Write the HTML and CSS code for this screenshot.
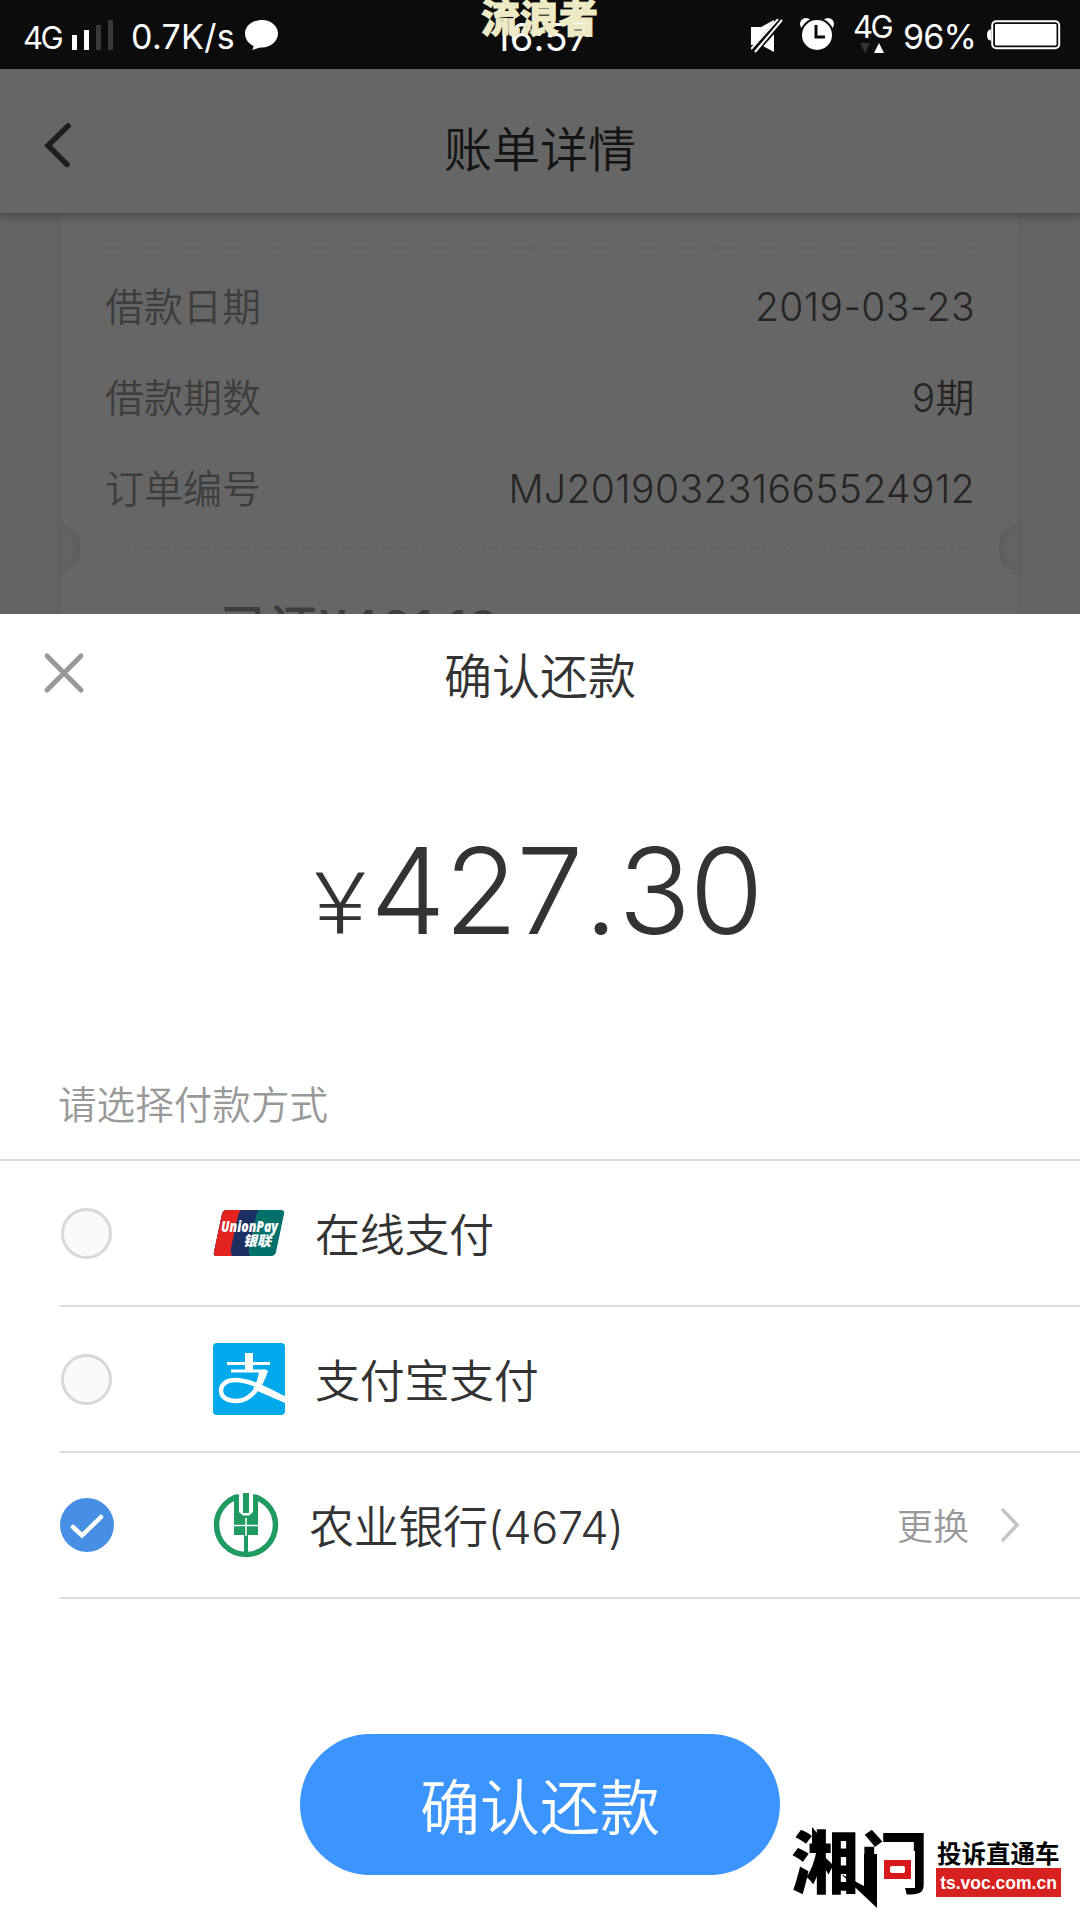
FILE: index.html
```html
<!DOCTYPE html>
<html lang="zh-CN">
<head>
    <meta charset="UTF-8">
    <meta name="viewport" content="width=device-width, initial-scale=1.0">
    <title>确认还款</title>
    <link rel="stylesheet" href="styles.css">
</head>
<body>

    <div class="status-bar">
        <span class="net">4G</span>
        <svg class="signal" width="42" height="30" viewBox="0 0 42 30">
            <path d="M0 15h5v15h-5zM12 10h5v20h-5z" fill="#fff"/>
            <path d="M24 5h5v25h-5zM36 0h5v30h-5z" fill="#383838"/>
        </svg>
        <span class="speed">0.7K/s</span>
        <svg class="bubble" width="34" height="31" viewBox="0 0 34 31">
            <path d="M17 0C26 0 33 6 33 13.500S26 27.500 17 27.500c-2 0-3 0-5 1l-5 1.500c1-1.500 1.500-2.500 1.500-4C3.500 23.500 0 19 0 13.500 0 6 7.500 0 17 0z" fill="#fff"/>
        </svg>
        <span class="time">16:57</span>
        <span class="nickname">流浪者</span>

        <div class="status-right">
            <svg class="mute" width="32" height="34" viewBox="0 0 32 34">
                <path d="M0 8h10L23 1v32L10 26H0z" fill="#fff"/>
                <path d="M1 34L31 0" stroke="#0c0c0c" stroke-width="8"/>
                <path d="M0 30L27 0M4 33L31 1" stroke="#fff" stroke-width="2"/>
            </svg>
            <svg class="alarm" width="34" height="33" viewBox="0 0 34 33">
                <circle cx="6" cy="6" r="6" fill="#fff"/>
                <circle cx="28" cy="6" r="6" fill="#fff"/>
                <circle cx="17" cy="17" r="17" fill="#0c0c0c"/>
                <circle cx="17" cy="17" r="15" fill="#fff"/>
                <path d="M16 7v12h9" fill="none" stroke="#0c0c0c" stroke-width="3"/>
            </svg>
            <div class="net-right">
                <span>4G</span>
                <svg width="26" height="10" viewBox="0 0 26 10">
                    <path d="M0 0h10L5 10z" fill="#333"/>
                    <path d="M14 10h10L19 0z" fill="#fff"/>
                </svg>
            </div>
            <span class="percent">96%</span>
            <svg class="battery" width="74" height="30" viewBox="0 0 74 30">
                <path d="M4 9.500q-4 0-4 5.500t4 5.500z" fill="#fff"/>
                <rect x="5.200" y="1.200" width="67" height="27" rx="4" fill="none" stroke="#fff" stroke-width="2"/>
                <rect x="8" y="4" width="61.500" height="21.500" rx="1" fill="#fff"/>
            </svg>
        </div>
    </div>

    <div class="page">
        <div class="nav">
            <svg class="back" width="30" height="48" viewBox="0 0 30 48">
                <path d="M26 5L6 24.500l19 19" fill="none" stroke="#4d4d4d" stroke-width="5.500" stroke-linecap="round"/>
            </svg>
            <h1>账单详情</h1>
        </div>
        <div class="bill">
            <div class="detail">
                <div class="detail-row"><span class="label">借款日期</span><span>2019-03-23</span></div>
                <div class="detail-row"><span class="label">借款期数</span><span>9期</span></div>
                <div class="detail-row"><span class="label">订单编号</span><span class="order-no">MJ201903231665524912</span></div>
            </div>
            <i class="notch notch-left"></i>
            <i class="notch notch-right"></i>
            <div class="repaid">已还¥421.12</div>
        </div>
        <div class="mask"></div>
    </div>

    <div class="sheet">
        <div class="sheet-head">
            <svg class="close" width="42" height="42" viewBox="0 0 42 42">
                <path d="M4 4l34 34M38 4L4 38" stroke="#999" stroke-width="5" stroke-linecap="round"/>
            </svg>
            <h2>确认还款</h2>
        </div>

        <div class="amount"><span class="yen">¥</span><span class="num">427<span class="dot">.</span>30</span></div>

        <div class="tip">请选择付款方式</div>

        <div class="option">
            <i class="radio"></i>
            <svg class="logo" width="72" height="46" viewBox="0 0 72 46">
                <path d="M14 0H68q4 0 3 4L63 42q-1 4-5 4H4q-4 0-3-4L9 4q1-4 5-4z" fill="#00706b"/>
                <path d="M14 0H46q-2 2-3 6L36 38q-1 4 1 8H4q-4 0-3-4L9 4q1-4 5-4z" fill="#1b2f63"/>
                <path d="M14 0H28q-2 2-3 6L18 38q-1 4 1 8H4q-4 0-3-4L9 4q1-4 5-4z" fill="#e2231f"/>
                <text x="8" y="22" class="union-en" textLength="57" lengthAdjust="spacingAndGlyphs">UnionPay</text>
                <text x="30" y="36" class="union-cn">银联</text>
            </svg>
            <span class="name">在线支付</span>
        </div>

        <div class="option">
            <i class="radio"></i>
            <svg class="logo" width="72" height="72" viewBox="0 0 72 72">
                <rect width="72" height="72" rx="4" fill="#00a8ec"/>
                <path d="M32 10h8v9h-8zM14 19h43v3H14zM32 22h8v6h-8z" fill="#fff"/>
                <path d="M18 28h35" stroke="#fff" stroke-width="3"/>
                <path d="M53 27C48 43 38 58 23 58c-9 0-15-4-15-10.500C8 41 14 37 22 37c14 0 29 8 50 19" fill="none" stroke="#fff" stroke-width="4.500"/>
                <path d="M46 28h8.500c-2 6-4 10-7 15l-5-2c2-4 3-8 3.500-13z" fill="#fff"/>
                <path d="M42 42l30 11v7L40 46z" fill="#fff"/>
            </svg>
            <span class="name">支付宝支付</span>
        </div>

        <div class="option">
            <i class="radio checked">
                <svg width="54" height="54" viewBox="0 0 54 54">
                    <path d="M13 29l9 8.500L41 19" fill="none" stroke="#fff" stroke-width="4.500" stroke-linecap="round"/>
                </svg>
            </i>
            <svg class="logo bank-logo" width="66" height="66" viewBox="0 0 66 66">
                <circle cx="33" cy="33" r="29.500" fill="none" stroke="#1f9a60" stroke-width="5.500"/>
                <path d="M24 0h18v10H24z" fill="#fff"/>
                <path d="M30 1h6v20h-6zM21 4l5-2V20l4 3.500h6l4-3.500V2L45 4v39H35v19h-4V43H21z" fill="#1f9a60"/>
                <path d="M20 33.500h26M33 26v18" stroke="#fff" stroke-width="1.500"/>
            </svg>
            <span class="name">农业银行(4674)</span>
            <span class="change">更换</span>
            <svg class="arrow" width="20" height="36" viewBox="0 0 20 36">
                <path d="M3 3l14 15L3 33" fill="none" stroke="#c4c4c4" stroke-width="3.500" stroke-linecap="round"/>
            </svg>
        </div>

        <button class="confirm-btn">确认还款</button>
    </div>

    <div class="watermark">
        <div class="brand">
            <span class="brand-xiang">湘</span><span class="brand-wen">问</span>
            <svg class="brand-mark" width="140" height="84" viewBox="0 0 140 84">
                <path d="M21 1l10 12v11H21z" fill="#000"/>
                <path d="M84 25h40v37H84z" fill="#fff"/>
                <path d="M50 48l23 12V28h13v54z" fill="#000"/>
                <rect x="93" y="34" width="27" height="19" fill="#d7191c"/>
                <rect x="99" y="40" width="15" height="7" rx="2" fill="#fff"/>
            </svg>
        </div>
        <div class="brand-side">
            <div class="brand-title">投诉直通车</div>
            <div class="brand-url">ts.voc.com.cn</div>
        </div>
    </div>

</body>
</html>
```
FILE: styles.css
```css
* {
    box-sizing: border-box;
}
body {
    margin: 0;
    width: 1080px;
    height: 1920px;
    position: relative;
    overflow: hidden;
    background: #fff;
    color: #333;
    font-family: "Inter", "Noto Sans CJK SC", sans-serif;
    font-weight: 350;
}
h1, h2 {
    margin: 0;
    font-size: 48px;
    font-weight: 350;
    line-height: 60px;
}
svg {
    display: block;
    flex: none;
}

/* status bar */
.status-bar {
    position: relative;
    display: flex;
    align-items: flex-start;
    height: 69px;
    padding-left: 23px;
    background: #0c0c0c;
    color: #fff;
    font-weight: 400;
    white-space: nowrap;
}
.net {
    width: 49px;
    margin-top: 18px;
    font-size: 31px;
    line-height: 40px;
    letter-spacing: -2.5px;
}
.signal {
    margin-top: 20px;
}
.speed {
    width: 114px;
    margin: 17px 0 0 17px;
    font-size: 34px;
    line-height: 40px;
    letter-spacing: 0.3px;
}
.bubble {
    margin-top: 20px;
}
.time {
    position: absolute;
    left: 494px;
    top: 17px;
    font-size: 38px;
    line-height: 40px;
    letter-spacing: 0.2px;
}
.nickname {
    position: absolute;
    left: 481px;
    top: -4px;
    color: #efeac6;
    font-size: 39px;
    font-weight: 900;
    line-height: 44px;
    -webkit-text-stroke: 1px #efeac6;
}
.status-right {
    display: flex;
    align-items: flex-start;
    margin-left: auto;
    padding-right: 19px;
}
.mute {
    margin: 19px 17px 0 0;
}
.alarm {
    margin: 18px 19px 0 0;
}
.net-right {
    width: 50px;
    padding-top: 10px;
    font-size: 31px;
    line-height: 33px;
    letter-spacing: -2.5px;
}
.net-right span {
    display: block;
}
.net-right svg {
    margin-left: 7px;
}
.percent {
    width: 84px;
    margin-top: 17px;
    font-size: 34px;
    line-height: 40px;
    letter-spacing: -0.8px;
}
.battery {
    margin-top: 20px;
}

/* bill page under the mask */
.page {
    position: relative;
    height: 545px;
    background: #f7f7f7;
    overflow: hidden;
}
.nav {
    position: relative;
    z-index: 1;
    display: flex;
    justify-content: center;
    height: 144px;
    padding-top: 51px;
    background: #fff;
    box-shadow: 0 2px 10px rgba(0, 0, 0, 0.35);
}
.back {
    position: absolute;
    left: 42px;
    top: 52px;
}
.bill {
    position: relative;
    width: 957px;
    height: 420px;
    margin-left: 61px;
    padding: 34px 43px 0;
    background: #fff;
    box-shadow: 0 0 10px rgba(0, 0, 0, 0.06);
}
.detail {
    height: 303px;
    padding-top: 12px;
    border-top: 2px dashed #efefef;
    border-bottom: 2px dashed #efefef;
}
.detail-row {
    display: flex;
    justify-content: space-between;
    height: 91px;
    color: #5c5c5c;
    font-size: 39px;
    line-height: 92px;
    letter-spacing: 0.4px;
}
.detail-row .label {
    padding-left: 1px;
    color: #999;
    letter-spacing: 0;
}
/* ticket cut-outs on both edges of the card */
.notch {
    position: absolute;
    top: 312px;
    width: 19px;
    height: 46px;
    background: #f7f7f7;
}
.notch-left {
    left: 0;
    border-radius: 0 23px 23px 0;
    box-shadow: inset -4px 0 6px rgba(0, 0, 0, 0.07);
}
.notch-right {
    right: 0;
    border-radius: 23px 0 0 23px;
    box-shadow: inset 4px 0 6px rgba(0, 0, 0, 0.07);
}
.repaid {
    margin: 48px 0 0 116px;
    color: #999;
    font-size: 48px;
    font-weight: 500;
    line-height: 60px;
    letter-spacing: 1.8px;
}
.mask {
    position: absolute;
    inset: 0;
    z-index: 2;
    background: rgba(0, 0, 0, 0.6);
}

/* payment sheet */
.sheet {
    height: 1306px;
    background: #fff;
}
.sheet-head {
    position: relative;
    height: 140px;
    padding-top: 33px;
    text-align: center;
}
.close {
    position: absolute;
    left: 43px;
    top: 38px;
}
.amount {
    display: flex;
    justify-content: center;
    align-items: baseline;
    height: 308px;
    padding-top: 62px;
    line-height: 150px;
}
.yen {
    margin-right: 8px;
    font-family: Roboto, sans-serif;
    font-size: 86px;
    font-weight: 300;
    transform: scaleX(1.17);
}
.num {
    font-size: 120px;
    font-weight: 350;
    letter-spacing: -1.5px;
}
.dot {
    margin: 0 2px;
}
.tip {
    height: 99px;
    padding-left: 58px;
    border-bottom: 2px solid #dcdcdc;
    color: #999;
    font-size: 38.6px;
    line-height: 86px;
}
.option {
    display: flex;
    align-items: center;
    height: 146px;
    margin-left: 60px;
    padding-right: 60px;
    border-bottom: 2px solid #dcdcdc;
}
.radio {
    width: 51px;
    height: 51px;
    margin: 0 101px 0 1px;
    border: 3px solid #d8d8d8;
    border-radius: 50%;
    background: #fafafa;
}
.radio.checked {
    width: 54px;
    height: 54px;
    margin: 0 99px 0 0;
    border: none;
    background: #468fe5;
}
.logo {
    margin-right: 30px;
}
.name {
    padding-top: 5px;
    font-size: 45px;
    line-height: 60px;
    letter-spacing: -0.3px;
}
.union-en {
    fill: #fff;
    font-family: "Open Sans", sans-serif;
    font-size: 15px;
    font-style: italic;
    font-weight: 800;
}
.union-cn {
    fill: #fff;
    font-family: "Noto Sans CJK SC", sans-serif;
    font-size: 14px;
    font-style: italic;
    font-weight: 900;
}
.change {
    margin-left: auto;
    padding-top: 4px;
    color: #999;
    font-size: 36px;
    line-height: 50px;
}
.arrow {
    margin-left: 31px;
}
.confirm-btn {
    display: block;
    width: 480px;
    height: 141px;
    margin: 135px auto 0;
    padding: 0 0 2px;
    border: none;
    border-radius: 71px;
    background: #3c94ff;
    color: #fff;
    font-family: inherit;
    font-size: 60px;
    font-weight: 350;
}

/* site watermark in the corner */
.watermark {
    position: absolute;
    left: 791px;
    top: 1826px;
    display: flex;
    color: #000;
}
.brand {
    position: relative;
    width: 145px;
    height: 84px;
    font-size: 68px;
    font-weight: 900;
    line-height: 74px;
    white-space: nowrap;
}
.brand-xiang {
    letter-spacing: 1px;
}
.brand-mark {
    position: absolute;
    left: 0;
    top: 0;
}
.brand-side {
    padding-top: 13px;
    width: 125px;
}
.brand-title {
    padding-left: 1px;
    height: 29px;
    font-size: 24.5px;
    font-weight: 700;
    line-height: 30px;
    white-space: nowrap;
}
.brand-url {
    height: 29px;
    background: #d6211f;
    color: #fff;
    font-family: "Liberation Sans", Arial, sans-serif;
    font-size: 17.5px;
    font-weight: 700;
    line-height: 31px;
    text-align: center;
}
```
